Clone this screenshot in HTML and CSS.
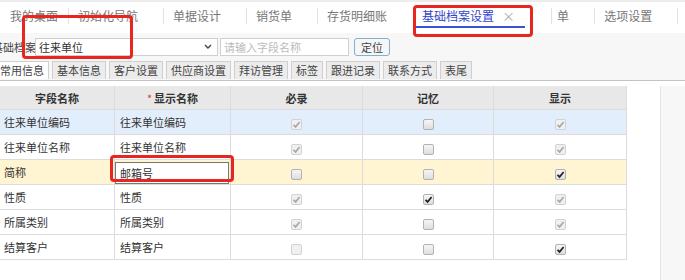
FILE: index.html
```html
<!DOCTYPE html>
<html lang="zh">
<head>
<meta charset="utf-8">
<link rel="stylesheet" href="styles.css">
</head>
<body>
<div class="page">
  <div class="topbar">
    <div class="tab first">我的桌面</div>
    <div class="tab">初始化导航</div>
    <div class="tab">单据设计</div>
    <div class="tab">销货单</div>
    <div class="tab">存货明细账</div>
    <div class="tab active"><span class="active-label">基础档案设置<span class="close">×</span></span></div>
    <div class="tab narrow">单</div>
    <div class="tab">选项设置</div>
    <div class="tab last"></div>
  </div>

  <div class="searchbar">
    <span class="search-label">基础档案</span>
    <div class="select">
      <span>往来单位</span>
      <svg class="chev" width="8" height="5" viewBox="0 0 8 5"><path d="M1 1 L4 4 L7 1" fill="none" stroke="#444" stroke-width="1.4"/></svg>
    </div>
    <div class="field">请输入字段名称</div>
    <div class="btn">定位</div>
  </div>

  <div class="subtabs">
    <div class="subtab on">常用信息</div>
    <div class="subtab">基本信息</div>
    <div class="subtab">客户设置</div>
    <div class="subtab">供应商设置</div>
    <div class="subtab">拜访管理</div>
    <div class="subtab">标签</div>
    <div class="subtab">跟进记录</div>
    <div class="subtab">联系方式</div>
    <div class="subtab">表尾</div>
  </div>

  <div class="content">
    <div class="panel">
      <table class="grid">
        <colgroup>
          <col class="c1"><col class="c2"><col class="c3"><col class="c4"><col class="c5">
        </colgroup>
        <thead>
          <tr><th>字段名称</th><th><span class="req">*</span>显示名称</th><th>必录</th><th>记忆</th><th>显示</th></tr>
        </thead>
        <tbody>
          <tr class="sel">
            <td>往来单位编码</td><td>往来单位编码</td>
            <td class="cb"><span class="box dis on"><svg viewBox="0 0 11 11"><path d="M2.5 5.8 L4.6 7.9 L8.6 3"/></svg></span></td>
            <td class="cb"><span class="box"></span></td>
            <td class="cb"><span class="box dis on"><svg viewBox="0 0 11 11"><path d="M2.5 5.8 L4.6 7.9 L8.6 3"/></svg></span></td>
          </tr>
          <tr>
            <td>往来单位名称</td><td>往来单位名称</td>
            <td class="cb"><span class="box dis on"><svg viewBox="0 0 11 11"><path d="M2.5 5.8 L4.6 7.9 L8.6 3"/></svg></span></td>
            <td class="cb"><span class="box"></span></td>
            <td class="cb"><span class="box dis on"><svg viewBox="0 0 11 11"><path d="M2.5 5.8 L4.6 7.9 L8.6 3"/></svg></span></td>
          </tr>
          <tr class="edit">
            <td>简称</td><td class="inp-cell"><div class="cell-input">邮箱号</div></td>
            <td class="cb"><span class="box"></span></td>
            <td class="cb"><span class="box"></span></td>
            <td class="cb"><span class="box on"><svg viewBox="0 0 11 11"><path d="M2.5 5.8 L4.6 7.9 L8.6 3"/></svg></span></td>
          </tr>
          <tr>
            <td>性质</td><td>性质</td>
            <td class="cb"><span class="box dis on"><svg viewBox="0 0 11 11"><path d="M2.5 5.8 L4.6 7.9 L8.6 3"/></svg></span></td>
            <td class="cb"><span class="box on"><svg viewBox="0 0 11 11"><path d="M2.5 5.8 L4.6 7.9 L8.6 3"/></svg></span></td>
            <td class="cb"><span class="box dis on"><svg viewBox="0 0 11 11"><path d="M2.5 5.8 L4.6 7.9 L8.6 3"/></svg></span></td>
          </tr>
          <tr>
            <td>所属类别</td><td>所属类别</td>
            <td class="cb"><span class="box dis on"><svg viewBox="0 0 11 11"><path d="M2.5 5.8 L4.6 7.9 L8.6 3"/></svg></span></td>
            <td class="cb"><span class="box"></span></td>
            <td class="cb"><span class="box dis on"><svg viewBox="0 0 11 11"><path d="M2.5 5.8 L4.6 7.9 L8.6 3"/></svg></span></td>
          </tr>
          <tr>
            <td>结算客户</td><td>结算客户</td>
            <td class="cb"><span class="box dis"></span></td>
            <td class="cb"><span class="box"></span></td>
            <td class="cb"><span class="box on"><svg viewBox="0 0 11 11"><path d="M2.5 5.8 L4.6 7.9 L8.6 3"/></svg></span></td>
          </tr>
        </tbody>
      </table>
    </div>
    <div class="side"></div>
  </div>

  <div class="mark mark-select"></div>
  <div class="mark mark-tab"></div>
  <div class="mark mark-cell"></div>
</div>
</body>
</html>
```

FILE: styles.css
```css
html, body {
  margin: 0;
  padding: 0;
}
body {
  font-family: "Noto Sans CJK SC", "Noto Sans", sans-serif;
  color: #333;
  background: #fff;
  width: 685px;
  height: 280px;
  overflow: hidden;
}
.page {
  position: relative;
  width: 685px;
  height: 280px;
  overflow: hidden;
}

/* top tabs */
.topbar {
  display: flex;
  align-items: flex-start;
  box-sizing: border-box;
  height: 33px;
  border-top: 2px solid #ececec;
  padding-top: 6px;
  background: #fff;
}
.tab {
  font-size: 12px;
  line-height: 16px;
  height: 16px;
  color: #777;
  padding: 0 25px 0 9px;
  border-left: 1px solid #e2e2e2;
  white-space: nowrap;
}
.tab.first {
  border-left: none;
  padding: 0 10px 0 10px;
}
.tab.active {
  border-left: 1px solid transparent;
  padding: 0 26px 0 1px;
  color: #3346c9;
  height: auto;
}
.active-label {
  display: inline-block;
  padding: 0 10px 2px 8px;
  border-bottom: 2px solid #3a52d6;
}
.close {
  display: inline-block;
  margin-left: 8px;
  color: #aaa;
  font-size: 13px;
}
.tab.narrow {
  padding-left: 5px;
}
.tab.last {
  padding: 0;
}

/* search bar */
.searchbar {
  display: flex;
  align-items: center;
  background: #f7f7f7;
  padding-top: 1px;
  box-sizing: border-box;
  height: 26px;
}
.search-label {
  font-size: 11px;
  color: #444;
  margin-left: -8px;
  width: 43px;
  white-space: nowrap;
}
.select {
  width: 183px;
  height: 18px;
  box-sizing: border-box;
  border: 1px solid #cfcfcf;
  background: #fff;
  display: flex;
  align-items: center;
  justify-content: space-between;
  padding: 0 5px 0 3px;
  font-size: 11px;
  color: #333;
}
.chev {
  display: block;
}
.field {
  margin-left: 2px;
  width: 129px;
  height: 18px;
  box-sizing: border-box;
  border: 1px solid #d0d0d0;
  background: #fff;
  font-size: 11px;
  line-height: 16px;
  color: #bbb;
  padding-left: 3px;
}
.btn {
  margin-left: 5px;
  width: 36px;
  height: 18px;
  box-sizing: border-box;
  border: 1px solid #7fb0d8;
  border-radius: 3px;
  background: #f6f6f6;
  font-size: 11px;
  line-height: 16px;
  text-align: center;
  color: #444;
}

/* sub tabs */
.subtabs {
  display: flex;
  gap: 3px;
  background: #f7f7f7;
  padding-top: 2px;
  border-bottom: 1px solid #c4c4c4;
  height: 19px;
}
.subtab {
  font-size: 11px;
  line-height: 17px;
  height: 17px;
  padding: 0 4px;
  border: 1px solid #cfcfcf;
  border-bottom: none;
  background: #ececec;
  color: #444;
  white-space: nowrap;
}
.subtab.on {
  background: #fff;
  margin-left: -5px;
  padding-left: 4px;
}

/* content */
.content {
  display: flex;
  padding-top: 5px;
  background: #fff;
  height: 220px;
}
.panel {
  width: 660px;
  background: #fff;
}
.side {
  flex: 1;
  background: #f7f7f7;
  border-left: 1px solid #e4e4e4;
}
.grid {
  border-collapse: collapse;
  table-layout: fixed;
  width: 627px;
  margin-left: -1px;
  font-size: 11px;
}
.c1 { width: 115px; }
.c2 { width: 116px; }
.c3 { width: 132px; }
.c4 { width: 131px; }
.c5 { width: 133px; }
.grid th, .grid td {
  border: 1px solid #dcdcdc;
  padding: 0 0 0 4px;
  text-align: left;
  white-space: nowrap;
}
.grid th {
  height: 23px;
  background: #e8e8e8;
  text-align: center;
  font-weight: bold;
  color: #333;
  padding: 0;
  border-top: none;
}
.grid td {
  height: 24px;
  color: #333;
}
.grid td:nth-child(2) {
  padding-left: 5px;
}
.req {
  color: #e33;
  margin-right: 2px;
  font-weight: normal;
}
.grid tr.sel td {
  background: #e3eefc;
}
.grid tr.edit td {
  background: #fff5d2;
}
.grid td.inp-cell {
  padding: 0;
  background: #fff5d2;
}
.cell-input {
  height: 22px;
  box-sizing: border-box;
  border: 1px solid #777;
  background: #fff;
  line-height: 20px;
  padding-left: 4px;
  margin: 1px 1px 0 0;
}
.grid td.cb {
  text-align: center;
  padding: 0;
}
.box {
  display: inline-block;
  width: 11px;
  height: 11px;
  box-sizing: border-box;
  border: 1px solid #b2b2b2;
  border-radius: 2px;
  background: linear-gradient(#f6f6f6, #dedede);
  vertical-align: middle;
  position: relative;
}
.box svg {
  position: absolute;
  left: -1px;
  top: -1px;
  width: 11px;
  height: 11px;
}
.box svg path {
  fill: none;
  stroke: #222;
  stroke-width: 1.7;
}
.box.dis {
  border-color: #d2d2d2;
  background: #f0f0f0;
}
.box.dis svg path {
  stroke: #a9a9a9;
}

/* annotation marks */
.mark {
  position: absolute;
  border: 3px solid #e8251f;
  border-radius: 4px;
  box-sizing: border-box;
}
.mark-select {
  left: 22px;
  top: 15px;
  width: 111px;
  height: 44px;
}
.mark-tab {
  left: 413px;
  top: 5px;
  width: 120px;
  height: 32px;
}
.mark-cell {
  left: 110px;
  top: 155px;
  width: 124px;
  height: 27px;
}
```
